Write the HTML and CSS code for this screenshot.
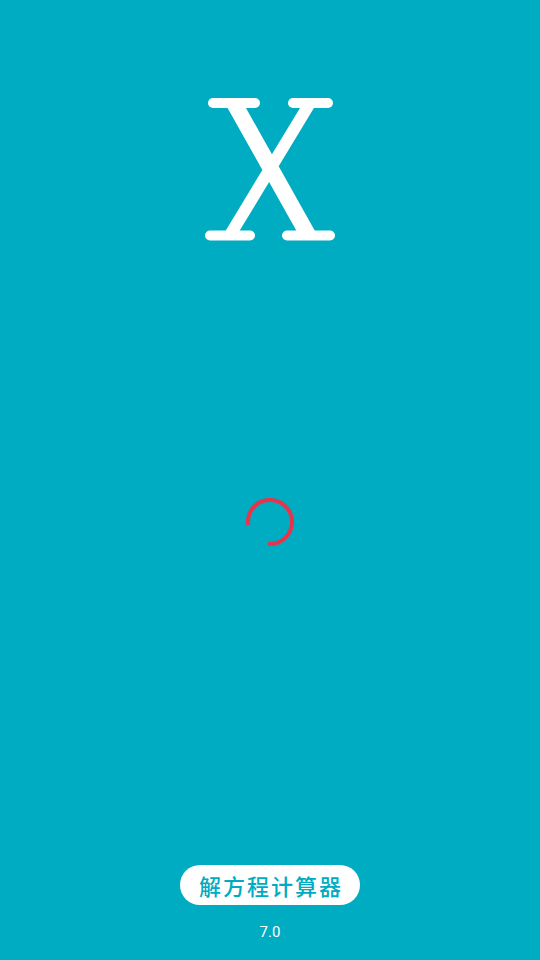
FILE: index.html
```html
<!DOCTYPE html>
<html lang="zh">
<head>
<meta charset="utf-8">
<link rel="stylesheet" href="styles.css">
</head>
<body>
<div class="screen">
  <div class="logo">
    <svg width="140" height="155" viewBox="0 0 140 155">
      <g stroke="#fff" fill="none">
        <line x1="34" y1="13" x2="108" y2="145" stroke-width="16"/>
        <line x1="110" y1="13" x2="30" y2="145" stroke-width="12"/>
        <g stroke-width="10" stroke-linecap="round">
          <line x1="13" y1="13" x2="55" y2="13"/>
          <line x1="93" y1="13" x2="128" y2="13"/>
          <line x1="10" y1="145.5" x2="50" y2="145.5"/>
          <line x1="87" y1="145.5" x2="130" y2="145.5"/>
        </g>
      </g>
    </svg>
  </div>
  <div class="spinner">
    <svg width="48" height="48" viewBox="0 0 48 48">
      <path d="M2.21 27.06 A22 22 0 1 1 22.08 45.92" fill="none" stroke="#e8334c" stroke-width="4"/>
    </svg>
  </div>
  <div class="footer">
    <div class="pill">解方程计算器</div>
    <div class="version">7.0</div>
  </div>
</div>
</body>
</html>
```

FILE: styles.css
```css
html, body {
  margin: 0;
  padding: 0;
  background: #00acc1;
}
.screen {
  width: 540px;
  height: 960px;
  display: flex;
  flex-direction: column;
  align-items: center;
  font-family: "Noto Sans", "Noto Sans CJK SC", sans-serif;
}
.logo {
  padding-top: 90px;
  height: 155px;
  display: flex;
}
.spinner {
  margin-top: 253px;
  height: 48px;
  display: flex;
}
.footer {
  margin-top: 319px;
  display: flex;
  flex-direction: column;
  align-items: center;
}
.pill {
  width: 180px;
  height: 40px;
  border-radius: 20px;
  background: #fff;
  color: #00acc1;
  font-family: "Noto Sans CJK SC", sans-serif;
  font-size: 22px;
  font-weight: 500;
  letter-spacing: 2px;
  text-indent: 2px;
  display: flex;
  align-items: center;
  justify-content: center;
  line-height: 1;
}
.version {
  margin-top: 18px;
  color: #fff;
  font-family: Roboto, "Noto Sans", sans-serif;
  font-size: 15px;
  line-height: 18px;
}
```
